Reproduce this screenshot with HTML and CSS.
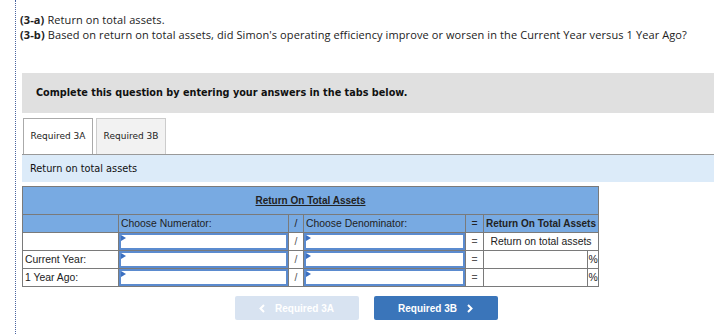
FILE: index.html
```html
<!DOCTYPE html>
<html>
<head>
	<title>Return on total assets</title>
	<link rel="stylesheet" href="styles.css">
</head>
<body>
	<div class="page">
		<div class="question">
			<p><b>(3-a)</b> Return on total assets.</p>
			<p><b>(3-b)</b> Based on return on total assets, did Simon's operating efficiency improve or worsen in the Current Year versus 1 Year Ago?</p>
		</div>
		<div class="work">
			<div class="banner">Complete this question by entering your answers in the tabs below.</div>
			<div class="tabs">
				<div class="tab active">Required 3A</div>
				<div class="tab">Required 3B</div>
			</div>
			<div class="tab-title">Return on total assets</div>
			<table class="ratio">
				<colgroup>
					<col class="c-label">
					<col class="c-num">
					<col class="c-op">
					<col class="c-den">
					<col class="c-eq">
					<col class="c-res">
					<col class="c-pct">
				</colgroup>
				<tr class="head">
					<th colspan="7"><u>Return On Total Assets</u></th>
				</tr>
				<tr class="sub">
					<th></th>
					<th class="left">Choose Numerator:</th>
					<th>/</th>
					<th class="left">Choose Denominator:</th>
					<th>=</th>
					<th colspan="2" class="res">Return On Total Assets</th>
				</tr>
				<tr>
					<td></td>
					<td class="pick"><div class="field"></div></td>
					<td class="op">/</td>
					<td class="pick"><div class="field"></div></td>
					<td class="op">=</td>
					<td colspan="2" class="center">Return on total assets</td>
				</tr>
				<tr>
					<td>Current Year:</td>
					<td class="pick"><div class="field"></div></td>
					<td class="op">/</td>
					<td class="pick"><div class="field"></div></td>
					<td class="op">=</td>
					<td></td>
					<td class="pct">%</td>
				</tr>
				<tr>
					<td>1 Year Ago:</td>
					<td class="pick"><div class="field"></div></td>
					<td class="op">/</td>
					<td class="pick"><div class="field"></div></td>
					<td class="op">=</td>
					<td></td>
					<td class="pct">%</td>
				</tr>
			</table>
			<div class="nav">
				<button type="button" class="btn off">
					<svg width="6" height="9" viewBox="0 0 6 9"><polyline points="5,1 1.5,4.5 5,8" fill="none" stroke="#fff" stroke-width="2"/></svg>
					Required 3A
				</button>
				<button type="button" class="btn on">
					Required 3B
					<svg width="6" height="9" viewBox="0 0 6 9"><polyline points="1,1 4.5,4.5 1,8" fill="none" stroke="#fff" stroke-width="2"/></svg>
				</button>
			</div>
		</div>
	</div>
</body>
</html>
```

FILE: styles.css
```css
body {
	margin: 0;
}
.page {
	margin-left: 15px;
	border-left: 1px dotted #4a64a0;
	padding: 12px 0 0 4px;
	min-height: 322px;
}
.question {
	font-family: "Open Sans", sans-serif;
	font-size: 11px;
	letter-spacing: 0.1px;
	line-height: 15px;
	color: #222;
}
.question p {
	margin: 0;
}
.work {
	margin: 31px 0 0 2px;
}
.banner {
	background-color: #e0e0e0;
	height: 40px;
	line-height: 40px;
	padding-left: 14px;
	font-family: "DejaVu Sans", Verdana, sans-serif;
	font-weight: bold;
	font-size: 9.7px;
	color: #111;
}
.tabs {
	display: flex;
	margin-top: 5px;
	padding-left: 1px;
	border-bottom: 1px solid #999;
	height: 36px;
}
.tab {
	width: 68px;
	height: 35px;
	line-height: 35px;
	margin-right: 3px;
	border: 1px solid #ccc;
	border-bottom: none;
	background-color: #f2f2f2;
	font-family: "DejaVu Sans", Verdana, sans-serif;
	font-size: 9px;
	text-align: center;
	color: #222;
}
.tab.active {
	background-color: #fff;
	border-color: #aaa;
}
.tab-title {
	background-color: #dcebf9;
	height: 27px;
	line-height: 27px;
	padding-left: 8px;
	font-family: "DejaVu Sans", Verdana, sans-serif;
	font-size: 9.75px;
	color: #111;
}
.ratio {
	margin-top: 4px;
	border-collapse: collapse;
	border: 1px solid #6f6f6f;
	width: 577px;
	font-family: "Liberation Sans", Arial, sans-serif;
	font-size: 10.4px;
	color: #222;
}
.c-label { width: 96px; }
.c-num { width: 170px; }
.c-op { width: 15px; }
.c-den { width: 162px; }
.c-eq { width: 18px; }
.c-res { width: 104px; }
.c-pct { width: 11px; }
.ratio th, .ratio td {
	border: 1px solid #7a7a7a;
	padding: 0 2px;
	height: 17px;
}
.ratio th {
	background-color: #78aae2;
	font-weight: normal;
}
.ratio .head th {
	height: 27px;
	font-weight: bold;
	font-size: 10px;
}
.ratio th.res {
	font-weight: bold;
	font-size: 10px;
}
.ratio th.left {
	text-align: left;
}
.ratio td.op {
	text-align: center;
	color: #555;
	padding: 0;
}
.ratio td.center {
	text-align: center;
}
.ratio td.pct {
	padding: 0;
	text-align: center;
}
.ratio td.pick {
	padding: 0;
}
.field {
	position: relative;
	height: 13px;
	border: 2px solid #5b8bcf;
	background: #fff;
}
.field::before {
	content: "";
	position: absolute;
	left: 0;
	top: 0;
	border-top: 3px solid transparent;
	border-bottom: 3px solid transparent;
	border-left: 5px solid #3b6fc0;
}
.nav {
	display: flex;
	justify-content: center;
	gap: 15px;
	margin-top: 9px;
	padding-right: 4px;
}
.btn {
	display: flex;
	align-items: center;
	justify-content: center;
	gap: 10px;
	width: 124px;
	height: 24px;
	border: none;
	border-radius: 2px;
	font-family: "Liberation Sans", Arial, sans-serif;
	font-weight: bold;
	font-size: 10px;
	color: #fff;
}
.btn.off {
	background-color: #d8e3f1;
}
.btn.on {
	background-color: #3a75ba;
}
```
